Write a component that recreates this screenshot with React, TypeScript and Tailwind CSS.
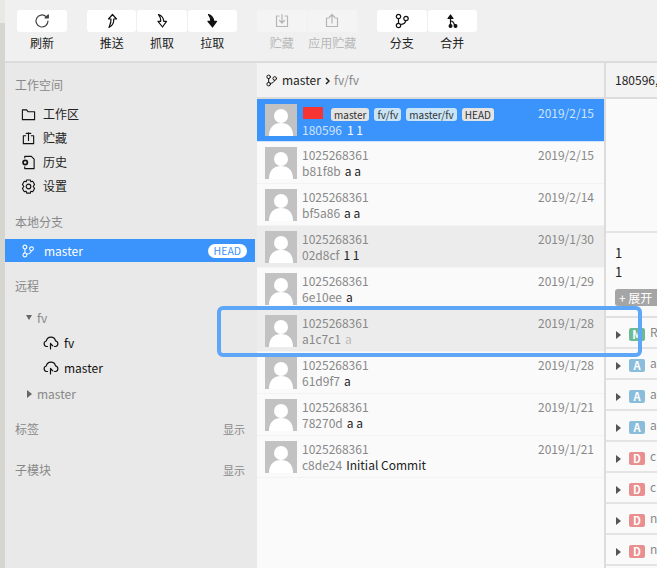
import React from "react";

const font = { fontFamily: '"Noto Sans CJK SC","Noto Sans",sans-serif' };

function I({ children, w = 16, c = "#111" }: { children: React.ReactNode; w?: number; c?: string }) {
  return (
    <svg width={w} height={w} viewBox="0 0 16 16" fill="none" stroke={c} strokeWidth="1.2" strokeLinecap="round" strokeLinejoin="round" className="shrink-0">
      {children}
    </svg>
  );
}

const Branch = ({ c = "#111", w = 16 }: { c?: string; w?: number }) => (
  <I c={c} w={w}>
    <circle cx="4.500" cy="3.500" r="2.200" />
    <circle cx="4.500" cy="12.500" r="2.200" />
    <circle cx="12" cy="5.500" r="2.200" />
    <path d="M4.500 5.700v4.600M6.500 11.500c3 0 4.800-1.500 5.200-3.800" />
  </I>
);

const tools: { w: string; items: { label: string; icon: React.ReactNode; off?: boolean }[] }[] = [
  { w: "w-[50px]", items: [{ label: "刷新", icon: <I c="#444"><path d="M14 8a6 6 0 1 1-1.800-4.300" /><path d="M14.300 1.800v3.200h-3.200z" fill="#444" /></I> }] },
  {
    w: "w-[150px]",
    items: [
      { label: "推送", icon: <I><path d="M8.500 1.500 4.500 6H7c.3 3-.8 5.500-2 8.500 3-1.500 5-4.500 4.700-8.500H12.500z" /></I> },
      { label: "抓取", icon: <I><path d="M4.500 1.500c3 1 5 3.500 5.200 6.800H12.500L8.500 14 4 8.300h2.800C7 6 6.200 3.500 4.500 1.500z" /></I> },
      { label: "拉取", icon: <I><path d="M4.500 1.500c3 1 5 3.500 5.200 6.800H12.500L8.500 14 4 8.300h2.800C7 6 6.200 3.500 4.500 1.500z" fill="#111" /></I> },
    ],
  },
  {
    w: "w-[100px]",
    items: [
      { label: "贮藏", off: true, icon: <I c="#b5b5b5"><path d="M5 3H2.500v10.500h11V3H11M8 1.500v8M5.500 7.500 8 10l2.500-2.500" /></I> },
      { label: "应用贮藏", off: true, icon: <I c="#b5b5b5"><path d="M5 5H2.500v8.500h11V5H11M8 10V1.500M5.500 4 8 1.500 10.500 4" /></I> },
    ],
  },
  {
    w: "w-[100px]",
    items: [
      { label: "分支", icon: <Branch /> },
      { label: "合并", icon: <I><path d="M6.500 13V3M4 5.500 6.500 2 9 5.500z" fill="#111" /><path d="M6.500 8c2 0 3.500 2 4 4" /><circle cx="6.500" cy="13" r="1.400" fill="#111" /><circle cx="11.500" cy="13" r="1.400" fill="#111" /></I> },
    ],
  },
];

const Avatar = () => (
  <div className="w-8 h-8 bg-[#c2c2c2] overflow-hidden shrink-0">
    <svg width="32" height="32" viewBox="0 0 32 32">
      <circle cx="16" cy="12" r="7" fill="#fff" />
      <path d="M4 32c0-9 5-13 12-13s12 4 12 13z" fill="#fff" />
    </svg>
  </div>
);

const rows = [
  { n: "1025268361", h: "b81f8b", m: "a a", d: "2019/2/15", bg: "bg-[#fafafa]" },
  { n: "1025268361", h: "bf5a86", m: "a a", d: "2019/2/14", bg: "bg-[#fafafa]" },
  { n: "1025268361", h: "02d8cf", m: "1 1", d: "2019/1/30", bg: "bg-[#ececec]" },
  { n: "1025268361", h: "6e10ee", m: "a", d: "2019/1/29", bg: "bg-[#fafafa]" },
  { n: "1025268361", h: "a1c7c1", m: "a", d: "2019/1/28", bg: "bg-[#ececec]", dim: true },
  { n: "1025268361", h: "61d9f7", m: "a", d: "2019/1/28", bg: "bg-[#fafafa]" },
  { n: "1025268361", h: "78270d", m: "a a", d: "2019/1/21", bg: "bg-[#fafafa]" },
  { n: "1025268361", h: "c8de24", m: "Initial Commit", d: "2019/1/21", bg: "bg-[#fafafa]" },
];

const files = [
  ["M", "bg-[#6dbb95]", "R"],
  ["A", "bg-[#8abcdb]", "a"],
  ["A", "bg-[#8abcdb]", "a"],
  ["A", "bg-[#8abcdb]", "a"],
  ["D", "bg-[#e98f90]", "c"],
  ["D", "bg-[#e98f90]", "c"],
  ["D", "bg-[#e98f90]", "n"],
  ["D", "bg-[#e98f90]", "n"],
];

const Cloud = () => (
  <I>
    <path d="M4.500 11.500H3.500a2.800 2.800 0 0 1-.2-5.500A4.700 4.700 0 0 1 12.500 5.800 2.900 2.900 0 0 1 12.500 11.500h-1" />
    <path d="M7.500 14V8.500M7.500 8.500l2.300 2.300" />
  </I>
);

const Tag = ({ t, bg }: { t: string; bg: string }) => (
  <span className={`mt-[2px] h-[13px] px-[3px] rounded-[3px] text-[10px] leading-[13px] text-[#333] ${bg}`}>{t}</span>
);

const Nav = ({ icon, t }: { icon: React.ReactNode; t: string }) => (
  <div className="h-6 flex items-center pl-[16px] gap-[7px] text-[12px] text-[#222]">
    {icon}
    <span>{t}</span>
  </div>
);

export default function App() {
  return (
    <div className="relative w-[657px] h-[568px] overflow-hidden flex text-[12px]" style={font}>
      <div className="w-[5px] shrink-0 flex flex-col bg-[#d6d5d0]">
        <div className="h-[23px] bg-[#e9e8e5]" />
      </div>
      <div className="flex-1 min-w-0 flex flex-col">
        <div className="h-[63px] shrink-0 bg-[#f0f0f0] border-b-2 border-[#dcdcdc] flex pl-3 pt-2.5 gap-5">
          {tools.map((g, i) => (
            <div key={i} className={`flex gap-px ${g.w}`}>
              {g.items.map((t) => (
                <div key={t.label} className="flex-1 min-w-0 flex flex-col items-center">
                  <div className={`w-full h-[22px] flex items-center justify-center rounded-[3px] ${t.off ? "bg-[#f4f4f4]" : "bg-white"}`}>{t.icon}</div>
                  <span className={`mt-px leading-[20px] text-[12px] whitespace-nowrap ${t.off ? "text-[#b8b8b8]" : "text-[#222]"}`}>{t.label}</span>
                </div>
              ))}
            </div>
          ))}
        </div>
        <div className="flex-1 min-h-0 flex">
          <div className="w-[252px] shrink-0 bg-[#e9e9e9] pt-[12px] text-[#888]">
            <div className="pl-2.5 h-5 leading-5">工作空间</div>
            <div className="mt-[7px]">
              <Nav t="工作区" icon={<I w={15}><path d="M1.500 3h4.500l1.500 2h7v8.500h-13z" /></I>} />
              <Nav t="贮藏" icon={<I w={15}><path d="M5 5H2.500v8.500h11V5H11M8 10V2M5.500 2.500h5" /></I>} />
              <Nav t="历史" icon={<I w={15}><path d="M4 3V1.500h7l3 3v10H4v-2" /><circle cx="4.500" cy="8" r="2.300" strokeWidth="1.800" /></I>} />
              <Nav t="设置" icon={<I w={15}><circle cx="8" cy="8" r="2.500" /><path d="M6 1h4l.5 2 2-.6 2 3.400L13 8l1.500 2.200-2 3.400-2-.6-.5 2H6l-.5-2-2 .6-2-3.400L3 8 1.500 5.800l2-3.400 2 .6z" /></I>} />
            </div>
            <div className="pl-2.5 h-5 leading-5 mt-[14px]">本地分支</div>
            <div className="mt-[7px] h-[23px] w-[250px] bg-[#3b94fb] flex items-center pl-[16px] text-white">
              <Branch c="#fff" w={14} />
              <span className="ml-[9px]">master</span>
              <span className="ml-auto mr-2 h-[14px] px-1.5 rounded-full bg-white text-[#3b94fb] text-[10.500px] leading-[14px]">HEAD</span>
            </div>
            <div className="pl-2.5 h-5 leading-5 mt-[14px]">远程</div>
            <div className="mt-[9px] h-[25px] flex items-center pl-[21px] gap-[5px]">
              <span className="w-0 h-0 border-x-[3.500px] border-x-transparent border-t-[5px] border-t-[#666]" />
              <span>fv</span>
            </div>
            <div className="h-[25px] flex items-center pl-[38px] gap-[5px] text-[#111]"><Cloud /><span>fv</span></div>
            <div className="h-[25px] flex items-center pl-[38px] gap-[5px] text-[#111]"><Cloud /><span>master</span></div>
            <div className="mt-px h-[25px] flex items-center pl-[22px] gap-[5px]">
              <span className="w-0 h-0 border-y-[4px] border-y-transparent border-l-[5px] border-l-[#666]" />
              <span>master</span>
            </div>
            <div className="mt-[13px] h-5 pl-2.5 pr-3 flex justify-between items-center"><span>标签</span><span className="text-[11px]">显示</span></div>
            <div className="mt-[21px] h-5 pl-2.5 pr-3 flex justify-between items-center"><span>子模块</span><span className="text-[11px]">显示</span></div>
          </div>
          <div className="w-[347px] shrink-0 bg-[#fafafa] flex flex-col">
            <div className="h-[36px] shrink-0 bg-[#f3f3f3] border-b-2 border-[#dcdcdc] flex items-center pl-2 gap-[4px] text-[#222]">
              <Branch w={13} />
              <span>master</span>
              <svg width="5" height="8" viewBox="0 0 5 8" fill="none" stroke="#222" strokeWidth="1.500" className="shrink-0 mt-px"><path d="M1 1l3 3-3 3" /></svg>
              <span className="text-[#888]">fv/fv</span>
            </div>
            <div className="h-[43px] shrink-0 bg-[#3b94fb] flex gap-[5px] pl-2 pr-[10px] pt-[5px] border-b border-[#cfe3fb]">
              <Avatar />
              <div className="flex-1 min-w-0">
                <div className="h-[18px] flex items-center gap-[5px]">
                  <span className="ml-px w-[20px] h-[12px] bg-[#f63434] mr-[3px]" />
                  <Tag t="master" bg="bg-[#e4e4e4]" />
                  <Tag t="fv/fv" bg="bg-[#c8e4f6]" />
                  <Tag t="master/fv" bg="bg-[#c8e4f6]" />
                  <Tag t="HEAD" bg="bg-[#e4e4e4]" />
                  <span className="ml-auto text-[#cfe3fb]">2019/2/15</span>
                </div>
                <div className="h-[15px] leading-[15px] flex gap-[5px]"><span className="text-[#cfe3fb]">180596</span><span className="text-white">1 1</span></div>
              </div>
            </div>
            {rows.map((r) => (
              <div key={r.h} className={`h-[42px] shrink-0 flex gap-[5px] pl-2 pr-[10px] pt-[5px] border-b border-[#f3f3f3] ${r.bg}`}>
                <Avatar />
                <div className="flex-1 min-w-0">
                  <div className="h-[15px] leading-[15px] flex justify-between text-[#888]"><span>{r.n}</span><span>{r.d}</span></div>
                  <div className="h-[18px] leading-[18px] flex gap-[4px]"><span className="text-[#888]">{r.h}</span><span className={r.dim ? "text-[#bbb]" : "text-[#222]"}>{r.m}</span></div>
                </div>
              </div>
            ))}
          </div>
          <div className="flex-1 min-w-0 bg-[#fafafa] border-l-2 border-[#dcdcdc] flex flex-col overflow-hidden">
            <div className="h-[36px] shrink-0 bg-[#f3f3f3] border-b-2 border-[#dcdcdc] flex items-center pl-[9px] text-[#222] whitespace-nowrap">180596,</div>
            <div className="h-[134px] shrink-0 border-b-2 border-[#e4e4e4]" />
            <div className="h-[85px] shrink-0 border-b-2 border-[#e0e0e0] pl-[9px] pt-[10px] text-[#222]">
              <div className="leading-[19px] text-[13px]">1</div>
              <div className="leading-[19px] text-[13px]">1</div>
              <div className="mt-[8px] w-[60px] h-[17px] leading-[17px] pl-1 bg-[#a5a5a5] rounded-[3px] text-white whitespace-nowrap">+ 展开</div>
            </div>
            {files.map((f, i) => (
              <div key={i} className="h-[31px] shrink-0 border-b-2 border-[#e4e4e4] flex items-center pl-[10px] text-[#888]">
                <span className="mt-[4px] w-0 h-0 border-y-[4px] border-y-transparent border-l-[5px] border-l-[#555]" />
                <span className={`mt-[4px] ml-[8px] w-4 h-[13px] rounded-[2px] ${f[1]} text-white text-[11px] leading-[13px] text-center font-semibold shrink-0`}>{f[0]}</span>
                <span className="ml-[5px] mb-[2px]">{f[2]}</span>
              </div>
            ))}
          </div>
        </div>
      </div>
      <div className="absolute left-[217px] top-[306px] w-[425px] h-[51px] border-[4px] border-[#5ea6f7] rounded-[6px]" />
    </div>
  );
}
